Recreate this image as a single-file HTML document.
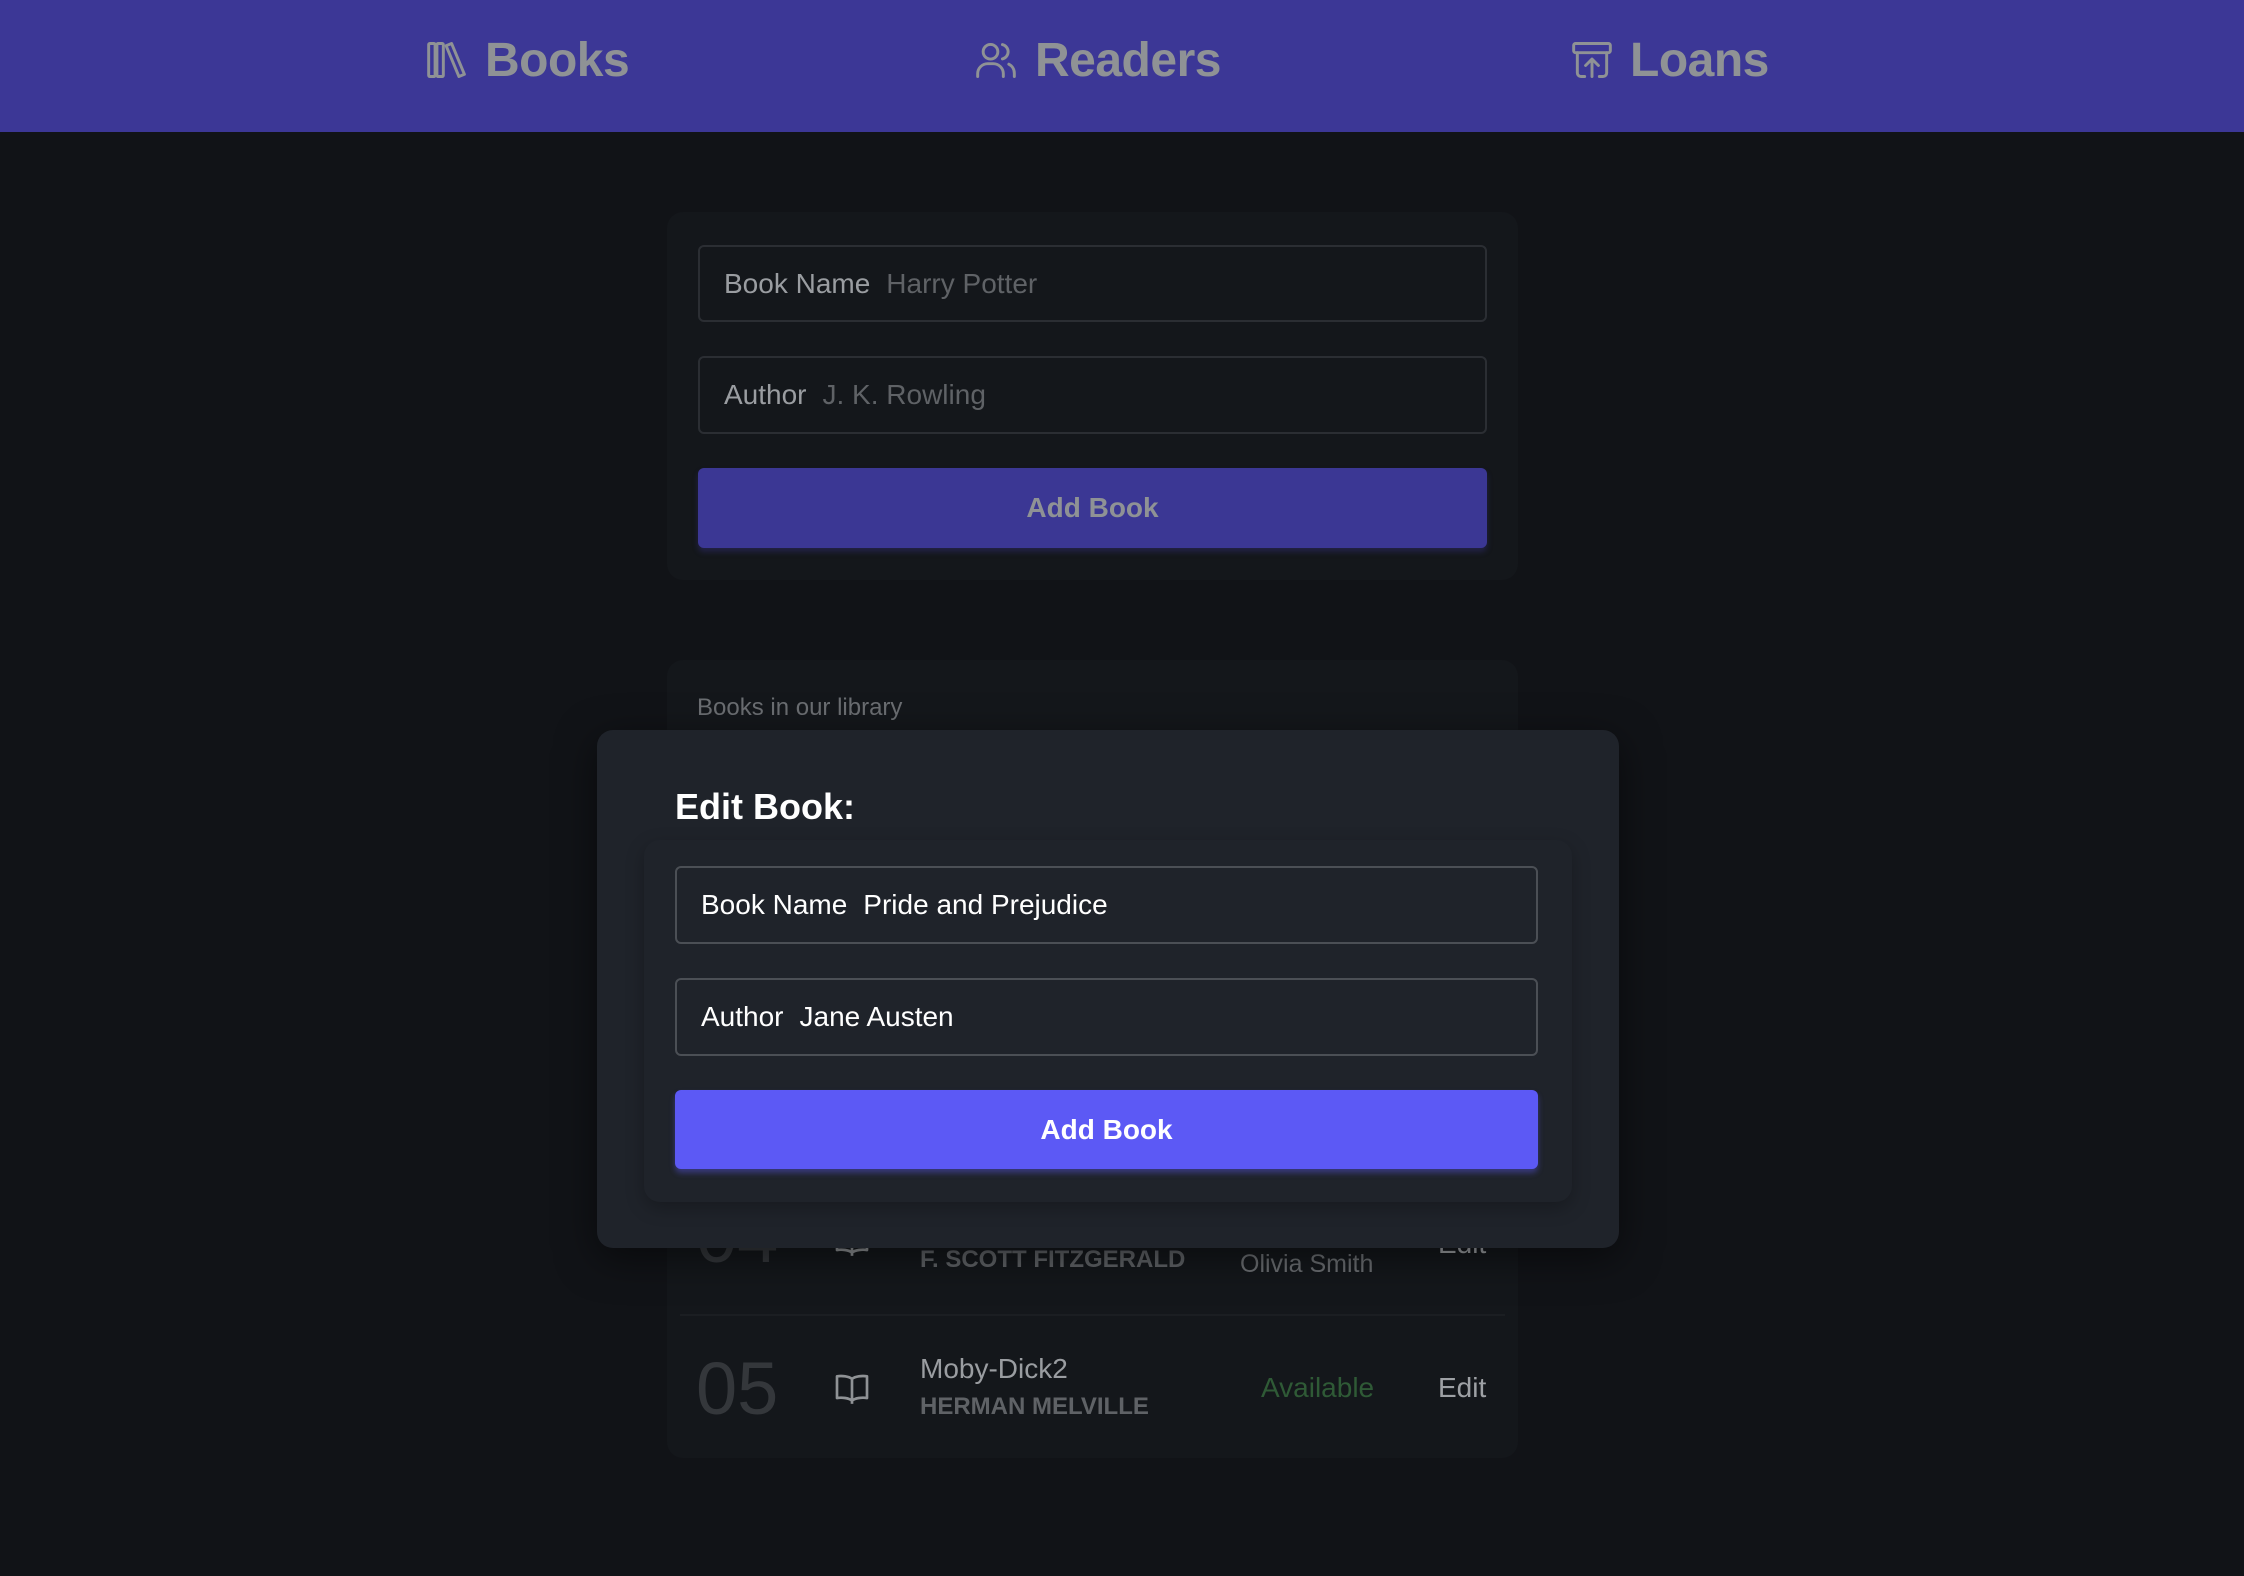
<!DOCTYPE html>
<html><head><meta charset="utf-8"><style>
*{margin:0;padding:0;box-sizing:border-box}
body{width:2244px;height:1576px;background:#111317;font-family:"Liberation Sans",sans-serif;position:relative;overflow:hidden}
.abs{position:absolute}
.hdr{left:0;top:0;width:2244px;height:132px;background:#3c3796}
.nav{position:absolute;top:28px;height:64px;display:flex;align-items:center;color:#8f9295;font-weight:bold;font-size:48px;letter-spacing:-0.5px}
.nav svg{margin-right:16px}
.card{background:#14171b;border-radius:16px}
.inp{position:absolute;border:2px solid #2b2e33;border-radius:6px;display:flex;align-items:center;padding-left:24px;font-size:28px}
.inp .l{color:#9a9da1;margin-right:16px}
.inp .p{color:#5f6266}
.btn{position:absolute;border-radius:6px;display:flex;align-items:center;justify-content:center;font-weight:bold;font-size:28px}
.num{position:absolute;font-size:74px;color:#34373b;line-height:1}
</style></head><body>
<div class="abs hdr"></div>
<div class="nav" style="left:425px">
<svg width="44" height="44" viewBox="0 0 24 24" fill="none" stroke="#8f9295" stroke-width="1.6" stroke-linejoin="round"><rect x="2" y="3" width="3.5" height="18" rx="0.6"/><rect x="6.5" y="3" width="3.5" height="18" rx="0.6"/><path d="M11.5 4.2l3-1.2 7 16.8-3 1.2z"/></svg>Books</div>
<div class="nav" style="left:973px">
<svg width="46" height="44" viewBox="0 0 24 24" fill="none" stroke="#8f9295" stroke-width="1.6" stroke-linecap="round"><circle cx="9" cy="7.5" r="4"/><path d="M2 21v-1.5a5.5 5.5 0 0 1 5.5-5.5h3a5.5 5.5 0 0 1 5.5 5.5V21"/><path d="M15.5 3.6a4 4 0 0 1 0 7.8"/><path d="M19 14.3a5.5 5.5 0 0 1 3 4.9V21"/></svg>Readers</div>
<div class="nav" style="left:1570px">
<svg width="44" height="44" viewBox="0 0 24 24" fill="none" stroke="#8f9295" stroke-width="1.6" stroke-linecap="round" stroke-linejoin="round"><rect x="2" y="3" width="20" height="5" rx="1"/><path d="M4 8v11a2 2 0 0 0 2 2h2M20 8v11a2 2 0 0 1-2 2h-2"/><path d="M12 21v-9M8.5 15l3.5-3.5 3.5 3.5"/></svg>Loans</div>

<div class="abs card" style="left:667px;top:212px;width:851px;height:368px"></div>
<div class="inp" style="left:698px;top:245px;width:789px;height:77px"><span class="l">Book Name</span><span class="p">Harry Potter</span></div>
<div class="inp" style="left:698px;top:356px;width:789px;height:78px"><span class="l">Author</span><span class="p">J. K. Rowling</span></div>
<div class="btn" style="left:698px;top:468px;width:789px;height:80px;background:#3b3794;color:#8f9295;box-shadow:0 4px 6px rgba(59,55,148,.35)">Add Book</div>

<div class="abs card" style="left:667px;top:660px;width:851px;height:798px"></div>
<div class="abs" style="left:697px;top:694px;font-size:24px;color:#6b6e72">Books in our library</div>

<!-- row 04 -->
<div class="num" style="left:696px;top:1200px">04</div>
<svg class="abs" style="left:832px;top:1220px" width="40" height="40" viewBox="0 0 24 24" fill="none" stroke="#8f9295" stroke-width="1.6" stroke-linejoin="round"><path d="M12 6.5C10 5 6 4.5 3 5v13c3-.5 7 0 9 1.5 2-1.5 6-2 9-1.5V5c-3-.5-7 0-9 1.5z"/><path d="M12 6.5v15"/></svg>
<div class="abs" style="left:920px;top:1246px;font-size:24px;font-weight:bold;color:#5f6266">F. SCOTT FITZGERALD</div>
<div class="abs" style="left:1240px;top:1250px;font-size:25px;color:#6b6e72">Olivia Smith</div>
<div class="abs" style="left:1438px;top:1228px;font-size:28px;color:#9ea1a5">Edit</div>
<div class="abs" style="left:680px;top:1314px;width:825px;height:2px;background:#1b1e22"></div>

<!-- row 05 -->
<div class="num" style="left:696px;top:1352px">05</div>
<svg class="abs" style="left:832px;top:1368px" width="40" height="40" viewBox="0 0 24 24" fill="none" stroke="#8f9295" stroke-width="1.6" stroke-linejoin="round"><path d="M12 6.5C10 5 6 4.5 3 5v13c3-.5 7 0 9 1.5 2-1.5 6-2 9-1.5V5c-3-.5-7 0-9 1.5z"/><path d="M12 6.5v15"/></svg>
<div class="abs" style="left:920px;top:1353px;font-size:28px;color:#9a9da1">Moby-Dick2</div>
<div class="abs" style="left:920px;top:1393px;font-size:24px;font-weight:bold;color:#5f6266">HERMAN MELVILLE</div>
<div class="abs" style="left:1261px;top:1372px;font-size:28px;color:#2f5a36">Available</div>
<div class="abs" style="left:1438px;top:1372px;font-size:28px;color:#9ea1a5">Edit</div>

<!-- modal -->
<div class="abs" style="left:597px;top:730px;width:1022px;height:518px;background:#1f232a;border-radius:16px;box-shadow:0 10px 40px rgba(0,0,0,.5)"></div>
<div class="abs" style="left:644px;top:840px;width:928px;height:362px;border-radius:16px;box-shadow:0 6px 18px rgba(0,0,0,.25)"></div>
<div class="abs" style="left:675px;top:786px;font-size:36px;font-weight:bold;color:#fff">Edit Book:</div>
<div class="inp" style="left:675px;top:866px;width:863px;height:78px;border-color:#4b4f55"><span class="l" style="color:#fff">Book Name</span><span style="color:#fff">Pride and Prejudice</span></div>
<div class="inp" style="left:675px;top:978px;width:863px;height:78px;border-color:#4b4f55"><span class="l" style="color:#fff">Author</span><span style="color:#fff">Jane Austen</span></div>
<div class="btn" style="left:675px;top:1090px;width:863px;height:79px;background:#5c59f5;color:#fff;box-shadow:0 4px 6px rgba(92,89,245,.4)">Add Book</div>
</body></html>
